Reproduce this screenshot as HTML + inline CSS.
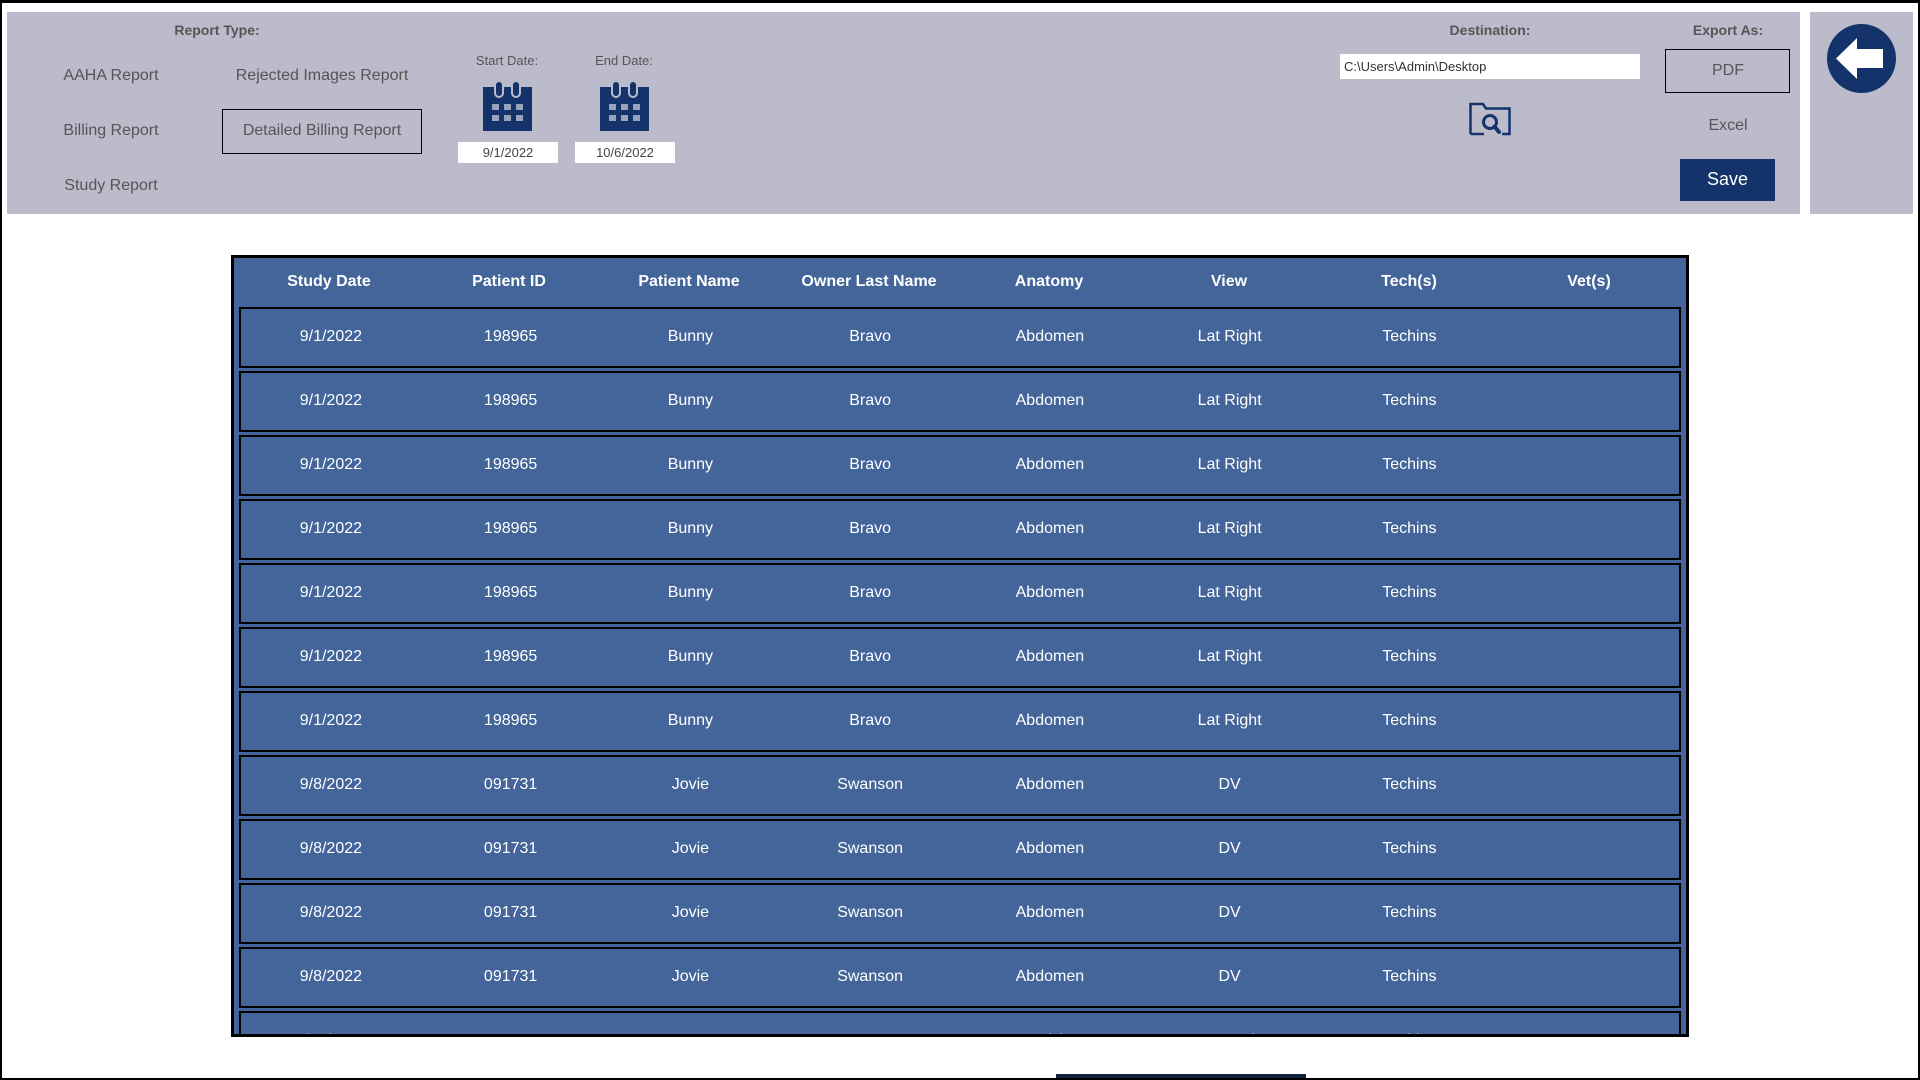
<!DOCTYPE html>
<html><head><meta charset="utf-8"><style>
*{margin:0;padding:0;box-sizing:border-box}
body{width:1920px;height:1080px;position:relative;background:#fff;font-family:"Liberation Sans",sans-serif;overflow:hidden}
.frame{position:absolute;left:0;top:0;width:1920px;height:1080px;border:2px solid #000;border-top-width:3px}
.abs{position:absolute}
.panel{background:#bcbbcb}
.lbl{position:absolute;transform:translateX(-50%);white-space:nowrap;color:#555;font-size:16px}
.b{font-weight:bold;font-size:14px;color:#555}
.datebox{position:absolute;background:#fff;height:21px;font-size:13px;color:#444;text-align:center;line-height:21px}
.tbl{position:absolute;left:231px;top:255px;width:1458px;height:782px;background:#436599;border:3px solid #000;border-bottom:none;overflow:hidden}
.hdr{position:absolute;top:0;left:5px;height:50px;display:flex}
.hdr div,.row div{width:180px;text-align:center;color:#fff;font-size:16px}
.hdr div{font-weight:bold;line-height:48px}
.row{position:absolute;left:5px;width:1442px;height:61px;border:2px solid #000;display:flex;line-height:56px}
</style></head><body>
<div class="abs panel" style="left:7px;top:12px;width:1793px;height:202px"></div>
<div class="abs panel" style="left:1810px;top:12px;width:103px;height:202px"></div>

<div class="lbl b" style="left:217px;top:22px">Report Type:</div>
<div class="lbl" style="left:111px;top:67px">AAHA Report</div>
<div class="lbl" style="left:322px;top:67px">Rejected Images Report</div>
<div class="lbl" style="left:111px;top:122px">Billing Report</div>
<div class="abs" style="left:222px;top:109px;width:200px;height:45px;border:1px solid #000"></div>
<div class="lbl" style="left:322px;top:122px">Detailed Billing Report</div>
<div class="lbl" style="left:111px;top:177px">Study Report</div>

<div class="lbl" style="left:507px;top:53px;font-size:13px">Start Date:</div>
<div class="lbl" style="left:624px;top:53px;font-size:13px">End Date:</div>
<svg class="abs" style="left:483px;top:81px" width="49" height="50" viewBox="0 0 49 50"><rect x="0" y="6" width="49" height="44" fill="#13336a"/><rect x="12" y="0" width="8" height="16" rx="4" fill="#13336a" stroke="#bcbbcb" stroke-width="2"/><rect x="29" y="0" width="8" height="16" rx="4" fill="#13336a" stroke="#bcbbcb" stroke-width="2"/><g fill="#9aa3bd"><rect x="9" y="23" width="7" height="6"/><rect x="21" y="23" width="7" height="6"/><rect x="33" y="23" width="7" height="6"/><rect x="9" y="34" width="7" height="6"/><rect x="21" y="34" width="7" height="6"/><rect x="33" y="34" width="7" height="6"/></g></svg>
<svg class="abs" style="left:600px;top:81px" width="49" height="50" viewBox="0 0 49 50"><rect x="0" y="6" width="49" height="44" fill="#13336a"/><rect x="12" y="0" width="8" height="16" rx="4" fill="#13336a" stroke="#bcbbcb" stroke-width="2"/><rect x="29" y="0" width="8" height="16" rx="4" fill="#13336a" stroke="#bcbbcb" stroke-width="2"/><g fill="#9aa3bd"><rect x="9" y="23" width="7" height="6"/><rect x="21" y="23" width="7" height="6"/><rect x="33" y="23" width="7" height="6"/><rect x="9" y="34" width="7" height="6"/><rect x="21" y="34" width="7" height="6"/><rect x="33" y="34" width="7" height="6"/></g></svg>
<div class="datebox" style="left:458px;top:142px;width:100px">9/1/2022</div>
<div class="datebox" style="left:575px;top:142px;width:100px">10/6/2022</div>

<div class="lbl b" style="left:1490px;top:22px">Destination:</div>
<div class="abs" style="left:1340px;top:54px;width:300px;height:25px;background:#fff;font-size:13px;color:#333;line-height:25px;padding-left:4px">C:\Users\Admin\Desktop</div>
<svg class="abs" style="left:1469px;top:102px" width="42" height="36" viewBox="0 0 42 36"><path d="M1.5 32V2H14L17 6.5H40.5V32H33" fill="none" stroke="#13336a" stroke-width="2.5"/><path d="M1.5 32H15" stroke="#13336a" stroke-width="2.5"/><circle cx="21" cy="20" r="6.5" fill="none" stroke="#13336a" stroke-width="3"/><path d="M25.5 24.5L30 30" stroke="#13336a" stroke-width="4" stroke-linecap="round"/></svg>

<div class="lbl b" style="left:1728px;top:22px">Export As:</div>
<div class="abs" style="left:1665px;top:49px;width:125px;height:44px;border:1px solid #000"></div>
<div class="lbl" style="left:1728px;top:62px">PDF</div>
<div class="lbl" style="left:1728px;top:117px">Excel</div>
<div class="abs" style="left:1680px;top:159px;width:95px;height:42px;background:#13336a;color:#fff;font-size:18px;text-align:center;line-height:40px">Save</div>

<svg class="abs" style="left:1827px;top:24px" width="69" height="69" viewBox="0 0 69 69"><circle cx="34.5" cy="34.5" r="34.5" fill="#13336a"/><path d="M9 34.5L30 14V25H56V44H30V55Z" fill="#fff"/></svg>

<div class="tbl">
<div class="hdr"><div>Study Date</div><div>Patient ID</div><div>Patient Name</div><div>Owner Last Name</div><div>Anatomy</div><div>View</div><div>Tech(s)</div><div>Vet(s)</div></div>
<div class="row" style="top:49px"><div>9/1/2022</div><div>198965</div><div>Bunny</div><div>Bravo</div><div>Abdomen</div><div>Lat Right</div><div>Techins</div><div></div></div>
<div class="row" style="top:113px"><div>9/1/2022</div><div>198965</div><div>Bunny</div><div>Bravo</div><div>Abdomen</div><div>Lat Right</div><div>Techins</div><div></div></div>
<div class="row" style="top:177px"><div>9/1/2022</div><div>198965</div><div>Bunny</div><div>Bravo</div><div>Abdomen</div><div>Lat Right</div><div>Techins</div><div></div></div>
<div class="row" style="top:241px"><div>9/1/2022</div><div>198965</div><div>Bunny</div><div>Bravo</div><div>Abdomen</div><div>Lat Right</div><div>Techins</div><div></div></div>
<div class="row" style="top:305px"><div>9/1/2022</div><div>198965</div><div>Bunny</div><div>Bravo</div><div>Abdomen</div><div>Lat Right</div><div>Techins</div><div></div></div>
<div class="row" style="top:369px"><div>9/1/2022</div><div>198965</div><div>Bunny</div><div>Bravo</div><div>Abdomen</div><div>Lat Right</div><div>Techins</div><div></div></div>
<div class="row" style="top:433px"><div>9/1/2022</div><div>198965</div><div>Bunny</div><div>Bravo</div><div>Abdomen</div><div>Lat Right</div><div>Techins</div><div></div></div>
<div class="row" style="top:497px"><div>9/8/2022</div><div>091731</div><div>Jovie</div><div>Swanson</div><div>Abdomen</div><div>DV</div><div>Techins</div><div></div></div>
<div class="row" style="top:561px"><div>9/8/2022</div><div>091731</div><div>Jovie</div><div>Swanson</div><div>Abdomen</div><div>DV</div><div>Techins</div><div></div></div>
<div class="row" style="top:625px"><div>9/8/2022</div><div>091731</div><div>Jovie</div><div>Swanson</div><div>Abdomen</div><div>DV</div><div>Techins</div><div></div></div>
<div class="row" style="top:689px"><div>9/8/2022</div><div>091731</div><div>Jovie</div><div>Swanson</div><div>Abdomen</div><div>DV</div><div>Techins</div><div></div></div>
<div class="row" style="top:753px"><div>9/22/2022</div><div>100865</div><div>Rover</div><div>Brown</div><div>Pelvis</div><div>VD Frog-leg</div><div>Techins</div><div></div></div>
</div>
<div class="abs" style="left:231px;top:1034px;width:1458px;height:3px;background:#000"></div>
<div class="abs" style="left:1056px;top:1074px;width:250px;height:6px;background:#0f2340"></div>
<div class="frame"></div>
</body></html>
